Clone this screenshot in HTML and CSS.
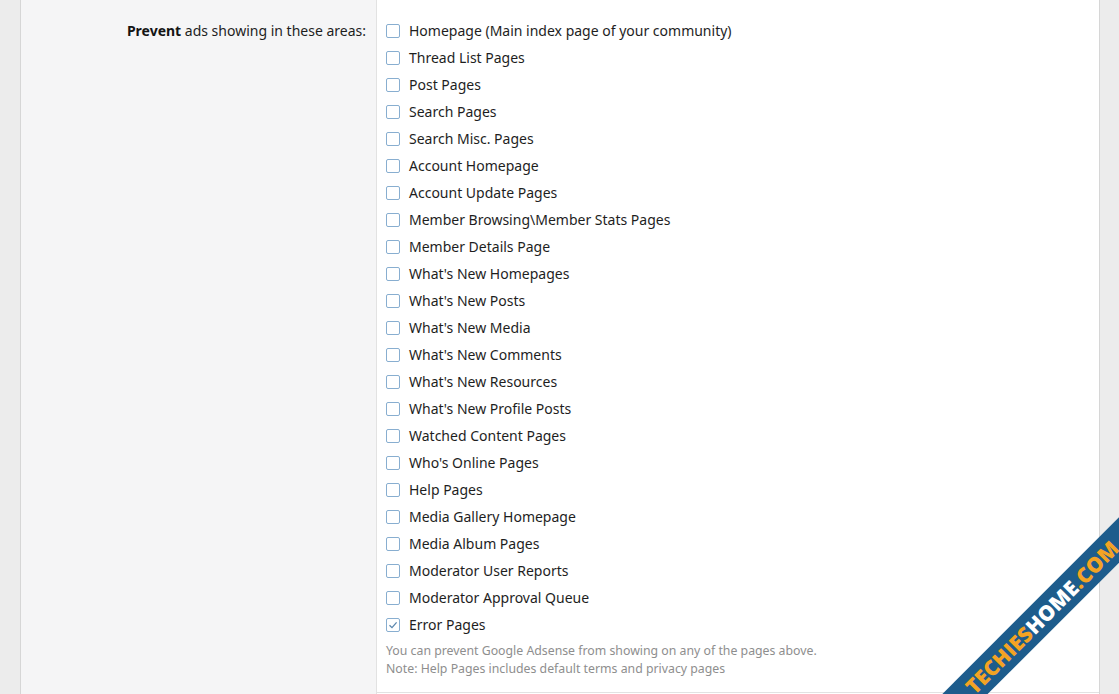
FILE: index.html
```html
<!DOCTYPE html>
<html lang="en">
<head>
    <meta charset="UTF-8">
    <meta name="viewport" content="width=device-width, initial-scale=1.0">
    <title>Advertising Options</title>
    <link rel="stylesheet" href="styles.css">
</head>
<body>

    <div class="page">
        <dl class="form-row">
            <dt class="row-label"><strong>Prevent</strong> ads showing in these areas:</dt>
            <dd class="row-controls">
                <ul class="check-list">
                    <li><span class="box"></span>Homepage (Main index page of your community)</li>
                    <li><span class="box"></span>Thread List Pages</li>
                    <li><span class="box"></span>Post Pages</li>
                    <li><span class="box"></span>Search Pages</li>
                    <li><span class="box"></span>Search Misc. Pages</li>
                    <li><span class="box"></span>Account Homepage</li>
                    <li><span class="box"></span>Account Update Pages</li>
                    <li><span class="box"></span>Member Browsing\Member Stats Pages</li>
                    <li><span class="box"></span>Member Details Page</li>
                    <li><span class="box"></span>What's New Homepages</li>
                    <li><span class="box"></span>What's New Posts</li>
                    <li><span class="box"></span>What's New Media</li>
                    <li><span class="box"></span>What's New Comments</li>
                    <li><span class="box"></span>What's New Resources</li>
                    <li><span class="box"></span>What's New Profile Posts</li>
                    <li><span class="box"></span>Watched Content Pages</li>
                    <li><span class="box"></span>Who's Online Pages</li>
                    <li><span class="box"></span>Help Pages</li>
                    <li><span class="box"></span>Media Gallery Homepage</li>
                    <li><span class="box"></span>Media Album Pages</li>
                    <li><span class="box"></span>Moderator User Reports</li>
                    <li><span class="box"></span>Moderator Approval Queue</li>
                    <li>
                        <span class="box checked">
                            <svg width="10" height="10" viewBox="0 0 10 10"><path d="M1.5 5.2 L4 7.6 L8.6 2.4" fill="none" stroke="#5b86ad" stroke-width="1.3"/></svg>
                        </span>Error Pages
                    </li>
                </ul>
                <p class="hint">You can prevent Google Adsense from showing on any of the pages above.<br>Note: Help Pages includes default terms and privacy pages</p>
            </dd>
        </dl>
    </div>

    <!-- watermark band over the corner -->
    <div class="watermark-clip">
        <div class="watermark"><span class="orange">TECHIES</span>HOME<span class="orange">.COM</span></div>
    </div>

</body>
</html>
```

FILE: styles.css
```css
html, body {
    height: 100%;
}

body {
    margin: 0;
    background-color: #ececec;
    font-family: "Noto Sans", "Open Sans", sans-serif;
    color: #1e1e1e;
    overflow: hidden;
    position: relative;
}

.page {
    margin: 0 19px 0 20px;
    height: 100%;
    border-left: 1px solid #d6d6d6;
    border-right: 1px solid #d6d6d6;
    background-color: #fff;
}

.form-row {
    display: flex;
    margin: 0;
    height: 100%;
}

.row-label {
    width: 345px;
    flex-shrink: 0;
    background-color: #f5f5f6;
    border-right: 1px solid #e2e2e2;
    text-align: right;
    padding: 20px 10px 0 0;
    font-size: 14px;
    line-height: 21px;
}

.row-label strong {
    font-weight: 700;
    color: #141414;
}

.row-controls {
    flex: 1;
    margin: 0;
    padding: 17px 10px 0 9px;
}

.check-list {
    list-style: none;
    margin: 0;
    padding: 0;
}

.check-list li {
    display: flex;
    align-items: center;
    height: 27px;
    font-size: 14px;
}

.box {
    width: 12px;
    height: 12px;
    border: 1px solid #88aed0;
    border-radius: 2px;
    background-color: #fff;
    margin-right: 9px;
    display: flex;
    align-items: center;
    justify-content: center;
}

.hint {
    margin: 4px -10px 0 -9px;
    padding: 0 0 14px 9px;
    font-size: 12.3px;
    line-height: 18px;
    color: #8e8e8e;
    border-bottom: 1px solid #e2e2e2;
}

.watermark-clip {
    position: absolute;
    right: 0;
    bottom: 0;
    width: 190px;
    height: 190px;
    overflow: hidden;
}

.watermark {
    position: absolute;
    left: -87px;
    top: 97px;
    width: 400px;
    height: 32px;
    line-height: 32px;
    transform: rotate(-45deg);
    background-color: #1d5c8c;
    color: #fff;
    text-align: center;
    font-family: "Open Sans", "DejaVu Sans", sans-serif;
    font-weight: 800;
    font-size: 21px;
}

.watermark .orange {
    color: #f3a324;
}
```
